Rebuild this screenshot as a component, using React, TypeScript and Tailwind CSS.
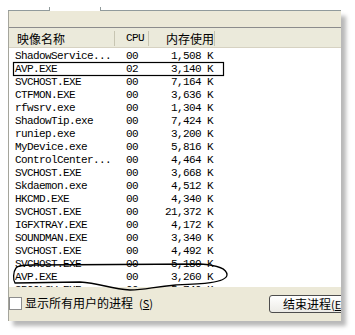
import React from "react"

const rows = [
  ["ShadowService...", "00", "1,508 K"],
  ["AVP.EXE", "02", "3,140 K"],
  ["SVCHOST.EXE", "00", "7,164 K"],
  ["CTFMON.EXE", "00", "3,636 K"],
  ["rfwsrv.exe", "00", "1,304 K"],
  ["ShadowTip.exe", "00", "7,424 K"],
  ["runiep.exe", "00", "3,200 K"],
  ["MyDevice.exe", "00", "5,816 K"],
  ["ControlCenter...", "00", "4,464 K"],
  ["SVCHOST.EXE", "00", "3,668 K"],
  ["Skdaemon.exe", "00", "4,512 K"],
  ["HKCMD.EXE", "00", "4,340 K"],
  ["SVCHOST.EXE", "00", "21,372 K"],
  ["IGFXTRAY.EXE", "00", "4,172 K"],
  ["SOUNDMAN.EXE", "00", "3,340 K"],
  ["SVCHOST.EXE", "00", "4,492 K"],
  ["SVCHOST.EXE", "00", "5,180 K"],
  ["AVP.EXE", "00", "3,260 K"],
  ["SPOOLSV.EXE", "00", "5,740 K"],
]

const cjk = "font-['SimSun','Noto_Sans_CJK_SC',sans-serif]"
const mono = "font-['Liberation_Mono',monospace] text-[11px] tracking-[-0.6px]"

export default function App() {
  return (
    <div className="relative w-[355px] h-[335px] bg-white overflow-hidden">
      {/* tab strip bottom */}
      <div className="flex h-[11px] pl-[8px] items-end">
        <div className="w-[41px] h-[1px] bg-[#919b9c]" />
        <div className="w-[1px] h-[4px] bg-[#919b9c]" />
        <div className="w-[50px]" />
        <div className="w-[1px] h-[4px] bg-[#919b9c]" />
        <div className="w-[240px] h-[1px] bg-[#919b9c]" />
      </div>

      {/* window */}
      <div className="ml-[8px] w-[333px] h-[310px] bg-[#ece9d8] border-l border-[#a5a59c] shadow-[5px_5px_4px_rgba(0,0,0,0.28)] flex flex-col overflow-hidden">
        <div className="h-[16px] shrink-0" />
        {/* list */}
        <div className="h-[260px] shrink-0 flex flex-col bg-white border-t border-[#8c8c8c] overflow-hidden">
          <div className={`h-[20px] shrink-0 flex items-center pt-[2px] bg-[#ebeadb] border-b border-[#d6d2c2] text-[12px] leading-none text-black whitespace-nowrap ${cjk}`}>
            <div className="w-[106px] shrink-0 pl-[8px] border-r border-[#c7c5b2] h-[15px] flex items-center">映像名称</div>
            <div className={`w-[34px] shrink-0 pl-[11px] border-r border-[#c7c5b2] h-[15px] flex items-center ${mono}`}>CPU</div>
            <div className="w-[66px] shrink-0 pl-[17px] border-r border-[#c7c5b2] h-[15px] flex items-center">内存使用</div>
          </div>
          <div className={`${mono} leading-none text-black pt-[2px]`}>
            {rows.map((r, i) => (
              <div key={i} className="h-[13px] flex items-center whitespace-nowrap">
                <div className="w-[106px] shrink-0 pl-[6px]">{r[0]}</div>
                <div className="w-[34px] shrink-0 pl-[11px]">{r[1]}</div>
                <div className="w-[64px] shrink-0 text-right">{r[2]}</div>
              </div>
            ))}
          </div>
        </div>

        {/* bottom bar */}
        <div className="h-[34px] shrink-0 flex items-start justify-between pt-[8px]">
          <label className={`h-[16px] flex items-center gap-[3px] text-[12px] leading-none text-black whitespace-nowrap ${cjk}`}>
            <span className="w-[13px] h-[13px] bg-white border border-[#8d8d8d]" />
            显示所有用户的进程
            <span className="ml-[3px] text-[11px]">(<u>S</u>)</span>
          </label>
          <button className={`w-[82px] h-[18px] shrink-0 mr-[-10px] rounded-[3px] border border-[#4d4d4d] bg-gradient-to-b from-white to-[#ecebe6] text-[12px] leading-none text-black text-left pl-[13px] whitespace-nowrap ${cjk}`}>
            结束进程<span className="text-[11px]">(<u>E</u>)</span>
          </button>
        </div>
      </div>

      {/* hand-drawn annotations */}
      <svg className="absolute left-0 top-0" width="355" height="335" fill="none" stroke="#000">
        <rect x="13.5" y="62.5" width="210" height="13" strokeWidth="1.2" />
        <path
          d="M16 268 C13 272 13 280 15 283 L80 282 C100 283 110 289 130 290 C146 290 152 287 176 285 C200 284 226 283 227 275 C227 268 216 265 200 264 L32 265 C22 265 17 266 16 268 Z"
          strokeWidth="1.3"
        />
      </svg>
    </div>
  )
}
